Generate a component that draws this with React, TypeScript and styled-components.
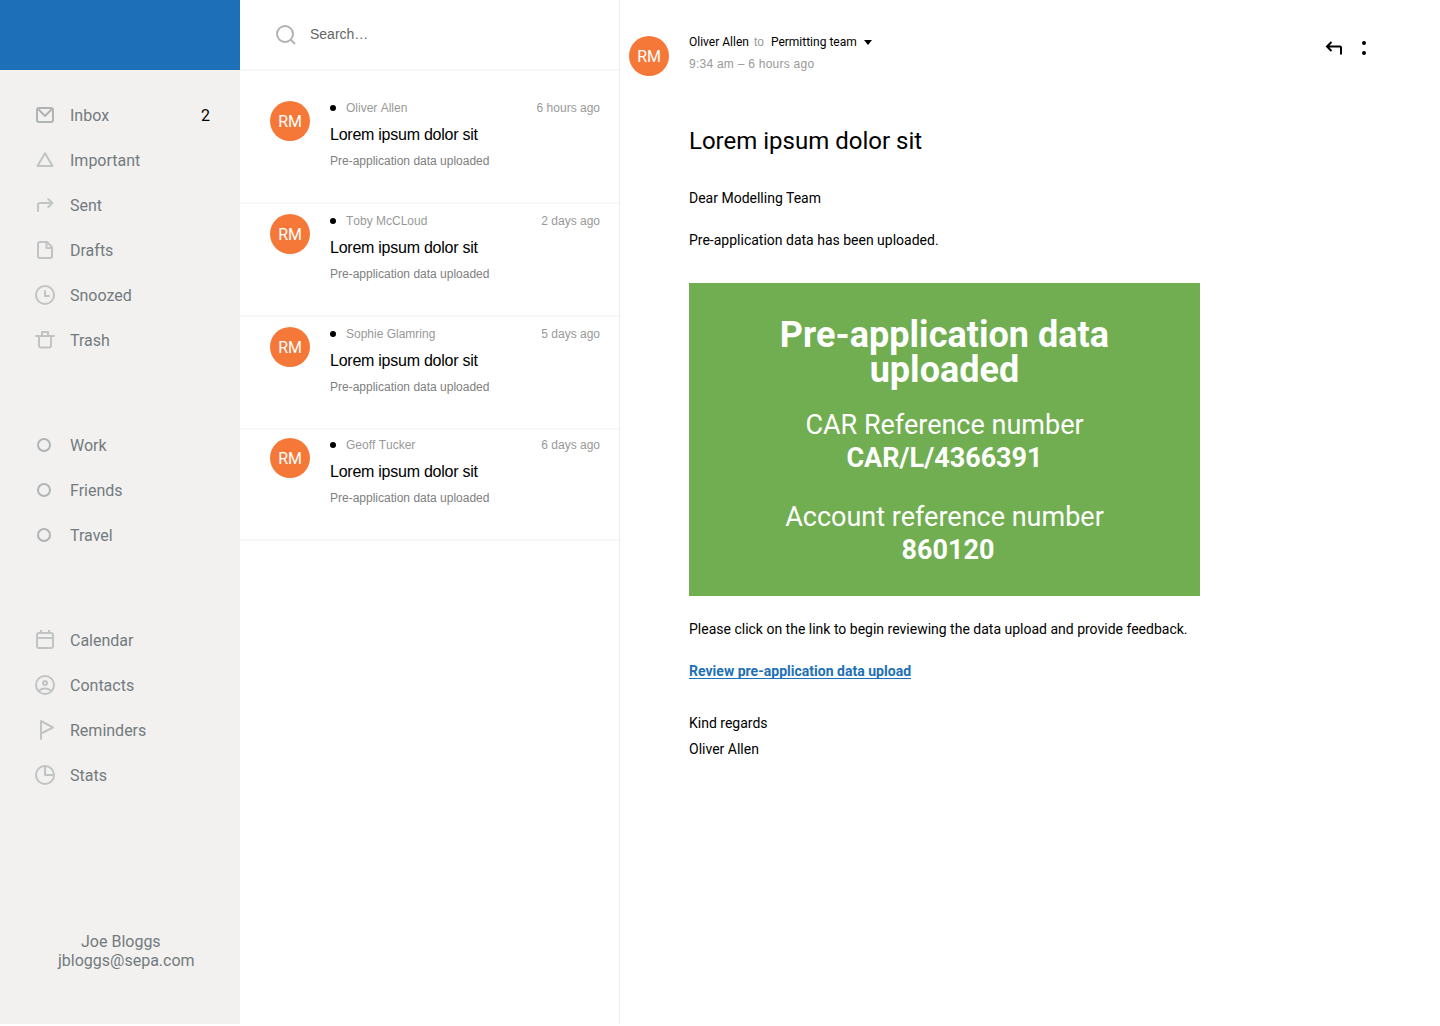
import React from "react";
import styled, { createGlobalStyle } from "styled-components";

const sans = `"Liberation Sans", Arial, sans-serif`;
const roboto = `Roboto, "Noto Sans", sans-serif`;

const GlobalStyle = createGlobalStyle`
  * { box-sizing: border-box; }
  body { margin: 0; background: #fff; color: #000; font-family: ${roboto}; }
  h1, h2, h3, p { margin: 0; font-weight: 400; }
`;

const Shell = styled.div`
  display: grid;
  grid-template-columns: 240px 380px 1fr;
  height: 1024px;
`;

const Sidebar = styled.aside`
  display: flex;
  flex-direction: column;
  background: #f3f1f0;
`;

const Brand = styled.div`
  flex: none;
  height: 70px;
  background: #1d70b8;
`;

const Nav = styled.nav`
  display: flex;
  flex-direction: column;
  gap: 60px;
  padding: 23px 30px 0 35px;
`;

const NavItem = styled.div`
  display: flex;
  align-items: center;
  height: 45px;
  font-size: 16px;
  line-height: 45px;
  color: #727b7e;
`;

const NavIcon = styled.svg<{ $tone?: string }>`
  flex: none;
  width: 20px;
  height: 20px;
  margin: 0 15px 1px 0;
  fill: none;
  stroke: ${(p) => p.$tone ?? "#c1c4c4"};
  stroke-width: 2;
  stroke-linecap: round;
  stroke-linejoin: round;
`;

const Count = styled.span`
  margin-left: auto;
  color: #000;
`;

const Account = styled.footer`
  margin-top: auto;
  padding: 0 46px 54px 58px;
  font-size: 16px;
  line-height: 19px;
  color: #727b7e;
`;

const AccountName = styled.div`
  padding-left: 23px;
`;

const MailList = styled.section`
  border-right: 1px solid #efefef;
  font-family: ${sans};
`;

const SearchBar = styled.div`
  display: flex;
  align-items: center;
  height: 71px;
  padding: 0 0 1px 35px;
  border-bottom: 2px solid #f7f7f7;
  font-size: 14px;
  line-height: 16px;
  color: #666;
`;

const SearchIcon = styled.svg`
  width: 22px;
  height: 22px;
  margin: 2px 13px 0 0;
  fill: none;
  stroke: #b1b3b3;
  stroke-width: 2;
`;

const MailRow = styled.article<{ $top: number; $height: number }>`
  display: flex;
  gap: 20px;
  height: ${(p) => p.$height}px;
  padding: ${(p) => p.$top}px 19px 0 30px;
  border-bottom: 2px solid #f7f7f7;
`;

const Avatar = styled.div`
  flex: none;
  width: 40px;
  height: 40px;
  border-radius: 50%;
  background: #f67838;
  color: #fff;
  font: 16px/41px ${roboto};
  letter-spacing: -0.25px;
  text-align: center;
`;

const MailBody = styled.div`
  flex: 1;
  display: flex;
  flex-direction: column;
  gap: 10px;
`;

const MailMeta = styled.div`
  display: flex;
  align-items: center;
  font-size: 12px;
  font-kerning: none;
  line-height: 14px;
  color: #999;
`;

const Unread = styled.span`
  width: 6px;
  height: 6px;
  margin-right: 10px;
  border-radius: 50%;
  background: #000;
`;

const MailTime = styled.time`
  margin-left: auto;
`;

const MailSubject = styled.h3`
  font-size: 16px;
  line-height: 19px;
  letter-spacing: -0.25px;
`;

const MailPreview = styled.p`
  font-size: 12px;
  line-height: 14px;
  color: #808080;
`;

const Reader = styled.main`
  padding: 35px 73px 0 9px;
`;

const ReaderHead = styled.header`
  display: flex;
  align-items: flex-start;
  height: 92px;
`;

const ReaderAvatar = styled(Avatar)`
  margin: 1px 20px 0 0;
`;

const Sender = styled.div`
  display: flex;
  flex-direction: column;
  gap: 8px;
`;

const SenderLine = styled.div`
  display: flex;
  align-items: center;
  font-size: 12px;
  line-height: 14px;
`;

const To = styled.span`
  margin: 0 7px 0 5px;
  font-family: ${sans};
  color: #999;
`;

const Caret = styled.span`
  margin: 1px 0 0 7px;
  border: 4px solid transparent;
  border-top: 5px solid #000;
  border-bottom: 0;
`;

const SentAt = styled.time`
  font: 12px/14px ${sans};
  letter-spacing: 0.25px;
  color: #999;
`;

const Actions = styled.div`
  display: flex;
  gap: 18px;
  margin: 4px 0 0 auto;
`;

const ActionIcon = styled.svg<{ $width: number }>`
  width: ${(p) => p.$width}px;
  height: 18px;
`;

const Content = styled.div`
  display: flex;
  flex-direction: column;
  align-items: flex-start;
  margin-left: 60px;
`;

const Title = styled.h1`
  font-size: 24px;
  line-height: 28px;
  margin-bottom: 30px;
`;

const Line = styled.p<{ $after?: number }>`
  font-size: 14px;
  line-height: 26px;
  margin-bottom: ${(p) => p.$after ?? 0}px;
`;

const Banner = styled.section`
  width: 511px;
  height: 313px;
  margin-bottom: 20px;
  padding-top: 35px;
  background: #71ae51;
  color: #fff;
  text-align: center;
`;

const BannerTitle = styled.h2`
  width: 400px;
  margin: 0 auto 21px;
  font-size: 36px;
  font-weight: 700;
  line-height: 35px;
  letter-spacing: 0.03px;
`;

const Reference = styled.div`
  font-size: 27px;
  line-height: 33px;
  margin-bottom: 26px;
`;

const RefNumber = styled.strong<{ $indent?: number }>`
  display: block;
  padding-left: ${(p) => p.$indent ?? 0}px;
  font-weight: 700;
`;

const ReviewLink = styled.a`
  margin: 6px 0 31px;
  border-bottom: 1px solid #1d70b8;
  font-size: 14px;
  font-weight: 700;
  line-height: 14px;
  letter-spacing: 0.02px;
  color: #1d70b8;
`;

type NavEntry = { label: string; icon: React.ReactNode; tone?: string; count?: number };

const ring = <circle cx="9" cy="10" r="6" />;

const groups: NavEntry[][] = [
  [
    {
      label: "Inbox",
      tone: "#b1b4b5",
      count: 2,
      icon: <><rect x="2" y="3" width="16" height="14" rx="2" /><path d="M3 4l7 7 7-7" /></>,
    },
    { label: "Important", icon: <path d="M10 3.2L17.5 16h-15z" /> },
    { label: "Sent", icon: <path d="M3 16v-6a2 2 0 0 1 2-2h12M13.3 4l4 4-4 4" /> },
    {
      label: "Drafts",
      icon: <path d="M5 2h7l5 5v9a2 2 0 0 1-2 2H5a2 2 0 0 1-2-2V4a2 2 0 0 1 2-2zM11.5 2.5V8H17" />,
    },
    { label: "Snoozed", icon: <><circle cx="10" cy="10" r="9" /><path d="M10 6v5h4" /></> },
    {
      label: "Trash",
      icon: <path d="M1 6h18M7 6V2h6v4M4 6v9.5a2 2 0 0 0 2 2h8a2 2 0 0 0 2-2V6" />,
    },
  ],
  [
    { label: "Work", icon: ring, tone: "#afb4b7" },
    { label: "Friends", icon: ring, tone: "#afb4b7" },
    { label: "Travel", icon: ring, tone: "#afb4b7" },
  ],
  [
    {
      label: "Calendar",
      icon: <><rect x="2" y="3" width="16" height="15" rx="2" /><path d="M2 8h16M6 .5V3M14 .5V3" /></>,
    },
    {
      label: "Contacts",
      icon: <><circle cx="10" cy="10" r="9" /><circle cx="10" cy="8" r="2" /><path d="M4 16c2.5-3.5 9.5-3.5 12 0" /></>,
    },
    { label: "Reminders", icon: <path d="M6 19V1l12 6.5L6 13.5" /> },
    { label: "Stats", icon: <><circle cx="10" cy="10" r="9" /><path d="M10 1v9h9" /></> },
  ],
];

const mails = [
  { from: "Oliver Allen", time: "6 hours ago", top: 30, height: 133 },
  { from: "Toby McCLoud", time: "2 days ago", top: 10, height: 113 },
  { from: "Sophie Glamring", time: "5 days ago", top: 10, height: 113 },
  { from: "Geoff Tucker", time: "6 days ago", top: 8, height: 111 },
];

export default function App() {
  return (
    <>
      <GlobalStyle />
      <Shell>
        <Sidebar>
          <Brand />
          <Nav>
            {groups.map((group, i) => (
              <div key={i}>
                {group.map((item) => (
                  <NavItem key={item.label}>
                    <NavIcon viewBox="0 0 20 20" $tone={item.tone}>{item.icon}</NavIcon>
                    {item.label}
                    {item.count && <Count>{item.count}</Count>}
                  </NavItem>
                ))}
              </div>
            ))}
          </Nav>
          <Account>
            <AccountName>Joe Bloggs</AccountName>
            <div>jbloggs@sepa.com</div>
          </Account>
        </Sidebar>

        <MailList>
          <SearchBar>
            <SearchIcon viewBox="0 0 22 22">
              <circle cx="10" cy="10" r="8" />
              <path d="M15.5 15.5l4.5 4.5" />
            </SearchIcon>
            Search…
          </SearchBar>
          {mails.map((mail) => (
            <MailRow key={mail.from} $top={mail.top} $height={mail.height}>
              <Avatar>RM</Avatar>
              <MailBody>
                <MailMeta>
                  <Unread />
                  {mail.from}
                  <MailTime>{mail.time}</MailTime>
                </MailMeta>
                <MailSubject>Lorem ipsum dolor sit</MailSubject>
                <MailPreview>Pre-application data uploaded</MailPreview>
              </MailBody>
            </MailRow>
          ))}
        </MailList>

        <Reader>
          <ReaderHead>
            <ReaderAvatar>RM</ReaderAvatar>
            <Sender>
              <SenderLine>
                Oliver Allen<To>to</To>Permitting team<Caret />
              </SenderLine>
              <SentAt>9:34 am – 6 hours ago</SentAt>
            </Sender>
            <Actions>
              <ActionIcon $width={18} viewBox="0 0 18 18" fill="none" stroke="#000" strokeWidth="2">
                <path d="M6.5 3L2 7.5 6.5 12M2 7.5h13a1 1 0 0 1 1 1V15.5" />
              </ActionIcon>
              <ActionIcon $width={6} viewBox="0 0 6 18">
                <circle cx="3" cy="4" r="2" />
                <circle cx="3" cy="14" r="2" />
              </ActionIcon>
            </Actions>
          </ReaderHead>
          <Content>
            <Title>Lorem ipsum dolor sit</Title>
            <Line $after={16}>Dear Modelling Team</Line>
            <Line $after={30}>Pre-application data has been uploaded.</Line>
            <Banner>
              <BannerTitle>Pre-application data uploaded</BannerTitle>
              <Reference>
                CAR Reference number
                <RefNumber>CAR/L/4366391</RefNumber>
              </Reference>
              <Reference>
                Account reference number
                <RefNumber $indent={7}>860120</RefNumber>
              </Reference>
            </Banner>
            <Line $after={16}>Please click on the link to begin reviewing the data upload and provide feedback.</Line>
            <ReviewLink>Review pre-application data upload</ReviewLink>
            <Line>Kind regards</Line>
            <Line>Oliver Allen</Line>
          </Content>
        </Reader>
      </Shell>
    </>
  );
}
